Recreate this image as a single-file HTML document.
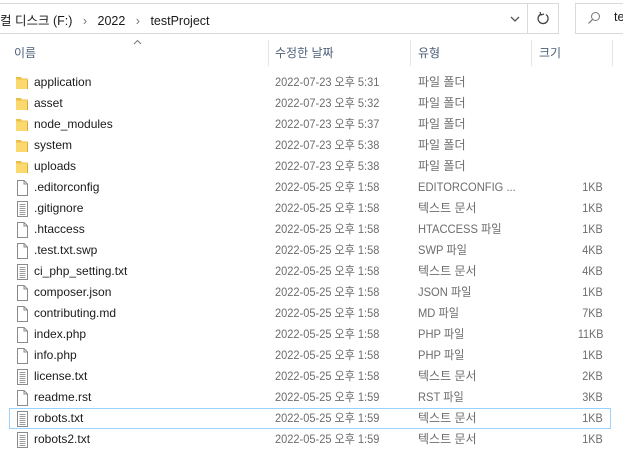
<!DOCTYPE html>
<html><head><meta charset="utf-8"><style>
*{margin:0;padding:0;box-sizing:border-box}
body{width:623px;height:461px;background:#fff;font-family:"Liberation Sans","Noto Sans CJK KR",sans-serif;font-size:12px;color:#1a1a1a;position:relative;overflow:hidden}
.abs{position:absolute}
.addr{left:-2px;top:3px;width:530px;height:31px;border:1px solid #d9d9d9;border-right:none}
.ref{left:527px;top:3px;width:32px;height:31px;border:1px solid #d9d9d9}
.srch{left:575px;top:3px;width:60px;height:31px;border:1px solid #d9d9d9}
.hdr{top:44px;color:#4c607a;font-size:12px}
.sep{top:40px;width:1px;height:26px;background:#e5e5e5}
.row{position:absolute;left:0;width:623px;height:21px;line-height:21px}
.row span{position:absolute;top:0;white-space:nowrap}
.n{left:34px}
.d{left:275px;color:#6d6d6d;transform:scaleX(0.92);transform-origin:0 0}
.t{left:418px;color:#6d6d6d}
.t.l{transform:scaleX(0.93);transform-origin:0 0}
.s{right:20px;color:#6d6d6d;transform:scaleX(0.9);transform-origin:100% 0}
.ic{position:absolute;left:15px;top:3px}
.sel{position:absolute;left:9px;top:408px;width:602px;height:21px;border:1px solid #99d1ff;background:#fff}
</style></head><body>
<div class="abs addr"></div>
<div class="abs" style="left:0;top:10px;font-size:12.5px;color:#1a1a1a">컬 디스크 (F:) <span style="color:#777;margin:0 7px">›</span> 2022 <span style="color:#777;margin:0 7px">›</span> testProject</div>
<svg class="abs" style="left:510px;top:15px" width="10" height="8"><path d="M1 2 L5 6 L9 2" fill="none" stroke="#555" stroke-width="1.3"/></svg>
<div class="abs ref"></div>
<svg class="abs" style="left:537px;top:11px" width="14" height="15"><path d="M4 3 A5 5 0 1 0 9 3.5" fill="none" stroke="#444" stroke-width="1.3"/><path d="M3 1 L4 4 L7 3" fill="none" stroke="#444" stroke-width="1.2"/></svg>
<div class="abs srch"></div>
<svg class="abs" style="left:587px;top:11px" width="14" height="14"><circle cx="8.5" cy="5.5" r="4" fill="none" stroke="#777" stroke-width="1"/><path d="M5.5 8.5 L1.5 12.5" stroke="#777" stroke-width="1.2"/></svg>
<div class="abs" style="left:614px;top:10px;font-size:12.5px">te</div>
<svg class="abs" style="left:133px;top:39px" width="9" height="6"><path d="M1 5 L4.5 1.5 L8 5" fill="none" stroke="#777" stroke-width="1"/></svg>
<div class="abs hdr" style="left:14px">이름</div>
<div class="abs sep" style="left:268px"></div>
<div class="abs hdr" style="left:275px">수정한 날짜</div>
<div class="abs sep" style="left:410px"></div>
<div class="abs hdr" style="left:418px">유형</div>
<div class="abs sep" style="left:531px"></div>
<div class="abs hdr" style="left:539px">크기</div>
<div class="abs sep" style="left:612px"></div>
<div class="sel"></div>
<div id="rows"></div>
<script>
var F='<svg class="ic" width="14" height="15"><path d="M1 2 H6 L7 3.5 H13 V14 H1 Z" fill="#e8c14a"/><path d="M1 4.5 H13 V14 H1 Z" fill="#fbd96e"/><path d="M12 5 V14 H13 V5Z" fill="#d9a93a"/></svg>';
var B='<svg class="ic" width="14" height="16"><path d="M2.5 0.5 H9 L12.5 4 V15.5 H2.5 Z" fill="#fff" stroke="#8a8a8a"/><path d="M9 0.5 V4 H12.5" fill="none" stroke="#8a8a8a"/></svg>';
var T='<svg class="ic" width="14" height="16"><path d="M2.5 0.5 H12.5 V15.5 H2.5 Z" fill="#fff" stroke="#8a8a8a"/><path d="M4.5 3.5H10.5M4.5 5.5H10.5M4.5 7.5H10.5M4.5 9.5H10.5M4.5 11.5H10.5M4.5 13.5H10.5" stroke="#9a9a9a"/></svg>';
var r=[
[F,'application','2022-07-23 오후 5:31','파일 폴더',''],
[F,'asset','2022-07-23 오후 5:32','파일 폴더',''],
[F,'node_modules','2022-07-23 오후 5:37','파일 폴더',''],
[F,'system','2022-07-23 오후 5:38','파일 폴더',''],
[F,'uploads','2022-07-23 오후 5:38','파일 폴더',''],
[B,'.editorconfig','2022-05-25 오후 1:58','EDITORCONFIG ...','1KB'],
[T,'.gitignore','2022-05-25 오후 1:58','텍스트 문서','1KB'],
[B,'.htaccess','2022-05-25 오후 1:58','HTACCESS 파일','1KB'],
[B,'.test.txt.swp','2022-05-25 오후 1:58','SWP 파일','4KB'],
[T,'ci_php_setting.txt','2022-05-25 오후 1:58','텍스트 문서','4KB'],
[B,'composer.json','2022-05-25 오후 1:58','JSON 파일','1KB'],
[B,'contributing.md','2022-05-25 오후 1:58','MD 파일','7KB'],
[B,'index.php','2022-05-25 오후 1:58','PHP 파일','11KB'],
[B,'info.php','2022-05-25 오후 1:58','PHP 파일','1KB'],
[T,'license.txt','2022-05-25 오후 1:58','텍스트 문서','2KB'],
[B,'readme.rst','2022-05-25 오후 1:59','RST 파일','3KB'],
[T,'robots.txt','2022-05-25 오후 1:59','텍스트 문서','1KB'],
[T,'robots2.txt','2022-05-25 오후 1:59','텍스트 문서','1KB']];
var h='';r.forEach(function(x,i){var l=/^[A-Z]/.test(x[3])?' l':'';h+='<div class="row" style="top:'+(72+i*21)+'px">'+x[0]+'<span class="n">'+x[1]+'</span><span class="d">'+x[2]+'</span><span class="t'+l+'">'+x[3]+'</span><span class="s">'+x[4]+'</span></div>'});
document.getElementById('rows').innerHTML=h;
</script>
</body></html>
